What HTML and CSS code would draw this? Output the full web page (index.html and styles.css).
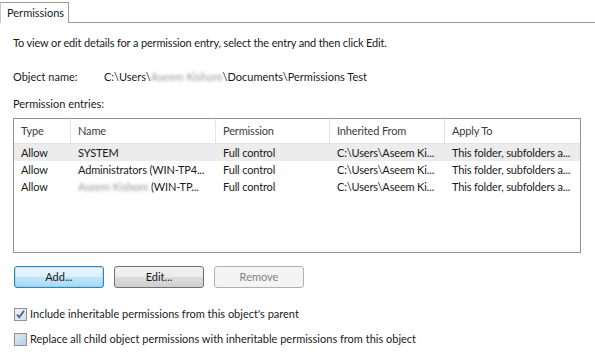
FILE: index.html
```html
<!DOCTYPE html>
<html>
<head>
<meta charset="utf-8">
<link rel="stylesheet" href="styles.css">
</head>
<body>
<div class="tabstrip">
  <div class="tab">Permissions</div>
  <div class="tabfill"></div>
</div>
<div class="pane">
  <p class="intro">To view or edit details for a permission entry, select the entry and then click Edit.</p>
  <div class="objrow">
    <span class="objlabel">Object name:</span>
    <span class="objval">C:\Users\<span class="blur">Aseem Kishore</span>\Documents\Permissions Test</span>
  </div>
  <div class="entries-label">Permission entries:</div>
  <div class="listbox">
    <div class="row head">
      <div class="c c1">Type</div><div class="c c2">Name</div><div class="c c3">Permission</div><div class="c c4">Inherited From</div><div class="c c5">Apply To</div>
    </div>
    <div class="row sel">
      <div class="c c1">Allow</div><div class="c c2">SYSTEM</div><div class="c c3">Full control</div><div class="c c4">C:\Users\Aseem Ki...</div><div class="c c5">This folder, subfolders a...</div>
    </div>
    <div class="row">
      <div class="c c1">Allow</div><div class="c c2">Administrators (WIN-TP4...</div><div class="c c3">Full control</div><div class="c c4">C:\Users\Aseem Ki...</div><div class="c c5">This folder, subfolders a...</div>
    </div>
    <div class="row">
      <div class="c c1">Allow</div><div class="c c2"><span class="blur">Aseem Kishore</span> (WIN-TP...</div><div class="c c3">Full control</div><div class="c c4">C:\Users\Aseem Ki...</div><div class="c c5">This folder, subfolders a...</div>
    </div>
  </div>
  <div class="buttons">
    <div class="btn def">Add...</div>
    <div class="btn">Edit...</div>
    <div class="btn dis">Remove</div>
  </div>
  <div class="check">
    <span class="box on"><svg width="11" height="11" viewBox="0 0 11 11"><path d="M2 5.5 L4.3 8.3 L9 1.8" fill="none" stroke="#4a5f97" stroke-width="1.8"/></svg></span>
    <span>Include inheritable permissions from this object's parent</span>
  </div>
  <div class="check second">
    <span class="box"></span>
    <span>Replace all child object permissions with inheritable permissions from this object</span>
  </div>
</div>
</body>
</html>
```
FILE: styles.css
```css
* { box-sizing: border-box; }
body {
  margin: 0;
  background: #fff;
  font-family: Lato, "Noto Sans", sans-serif;
  font-size: 11px;
  color: #1a1a1a;
  width: 595px;
  height: 363px;
  overflow: hidden;
}
.tabstrip {
  display: flex;
  height: 23px;
  align-items: flex-end;
}
.tab {
  height: 21px;
  width: 69px;
  border: 1px solid #9a9a9a;
  border-bottom: none;
  border-left-color: #c8c8c8;
  padding: 2px 0 0 6px;
  background: #fff;
  line-height: 15px;
}
.tabfill {
  flex: 1;
  height: 1px;
  background: #9a9a9a;
}
.pane {
  padding: 0 0 0 13px;
}
.intro {
  margin: 12px 0 0;
  line-height: 16px;
  letter-spacing: -0.15px;
}
.objrow {
  display: flex;
  margin-top: 18px;
  line-height: 16px;
}
.objlabel { width: 91px; }
.blur {
  color: #9a9a9a;
  filter: blur(1.4px);
}
.entries-label {
  margin-top: 11px;
  line-height: 16px;
}
.listbox {
  margin-top: 6px;
  width: 568px;
  height: 135px;
  border: 1px solid #8f9399;
  background: #fff;
}
.row {
  display: flex;
  height: 17px;
  line-height: 17px;
  white-space: nowrap;
}
.row.head {
  height: 25px;
  line-height: 24px;
  border-bottom: 1px solid #e3e3e3;
  color: #3c3c3c;
}
.row.head .c { border-right: 1px solid #e4e4e4; overflow: hidden; }
.row.head .c5 { border-right: none; }
.row.sel { background: #ececec; }
.c { padding-left: 7px; letter-spacing: -0.15px; }
.c1 { width: 57px; }
.c2 { width: 145px; }
.c3 { width: 114px; }
.c4 { width: 115px; }
.c5 { flex: 1; }
.buttons {
  display: flex;
  gap: 10px;
  margin: 13px 0 0 1px;
}
.btn {
  width: 90px;
  height: 22px;
  line-height: 20px;
  text-align: center;
  border: 1px solid #707070;
  border-radius: 3px;
  background: linear-gradient(#f2f2f2 0%, #ebebeb 50%, #dddddd 51%, #cfcfcf 100%);
}
.btn.def {
  border-color: #3c7fb1;
  background: linear-gradient(#eaf6fd 0%, #d9f0fc 50%, #bee6fd 51%, #a7d9f5 100%);
  box-shadow: inset 0 0 0 1px #48d3ff55;
}
.btn.dis {
  border-color: #adb2b5;
  background: #f4f4f4;
  color: #838383;
}
.check {
  display: flex;
  align-items: center;
  gap: 3px;
  margin-top: 18px;
  line-height: 16px;
}
.check.second { margin-top: 9px; }
.box {
  width: 13px;
  height: 13px;
  border: 1px solid #8e8f8f;
  background: linear-gradient(135deg, #dfe8f4, #b9cfe6);
  display: flex;
  align-items: center;
  justify-content: center;
  margin-left: 1px;
}
.box.on { background: linear-gradient(135deg, #eef2f8, #d6dfec); }
```
